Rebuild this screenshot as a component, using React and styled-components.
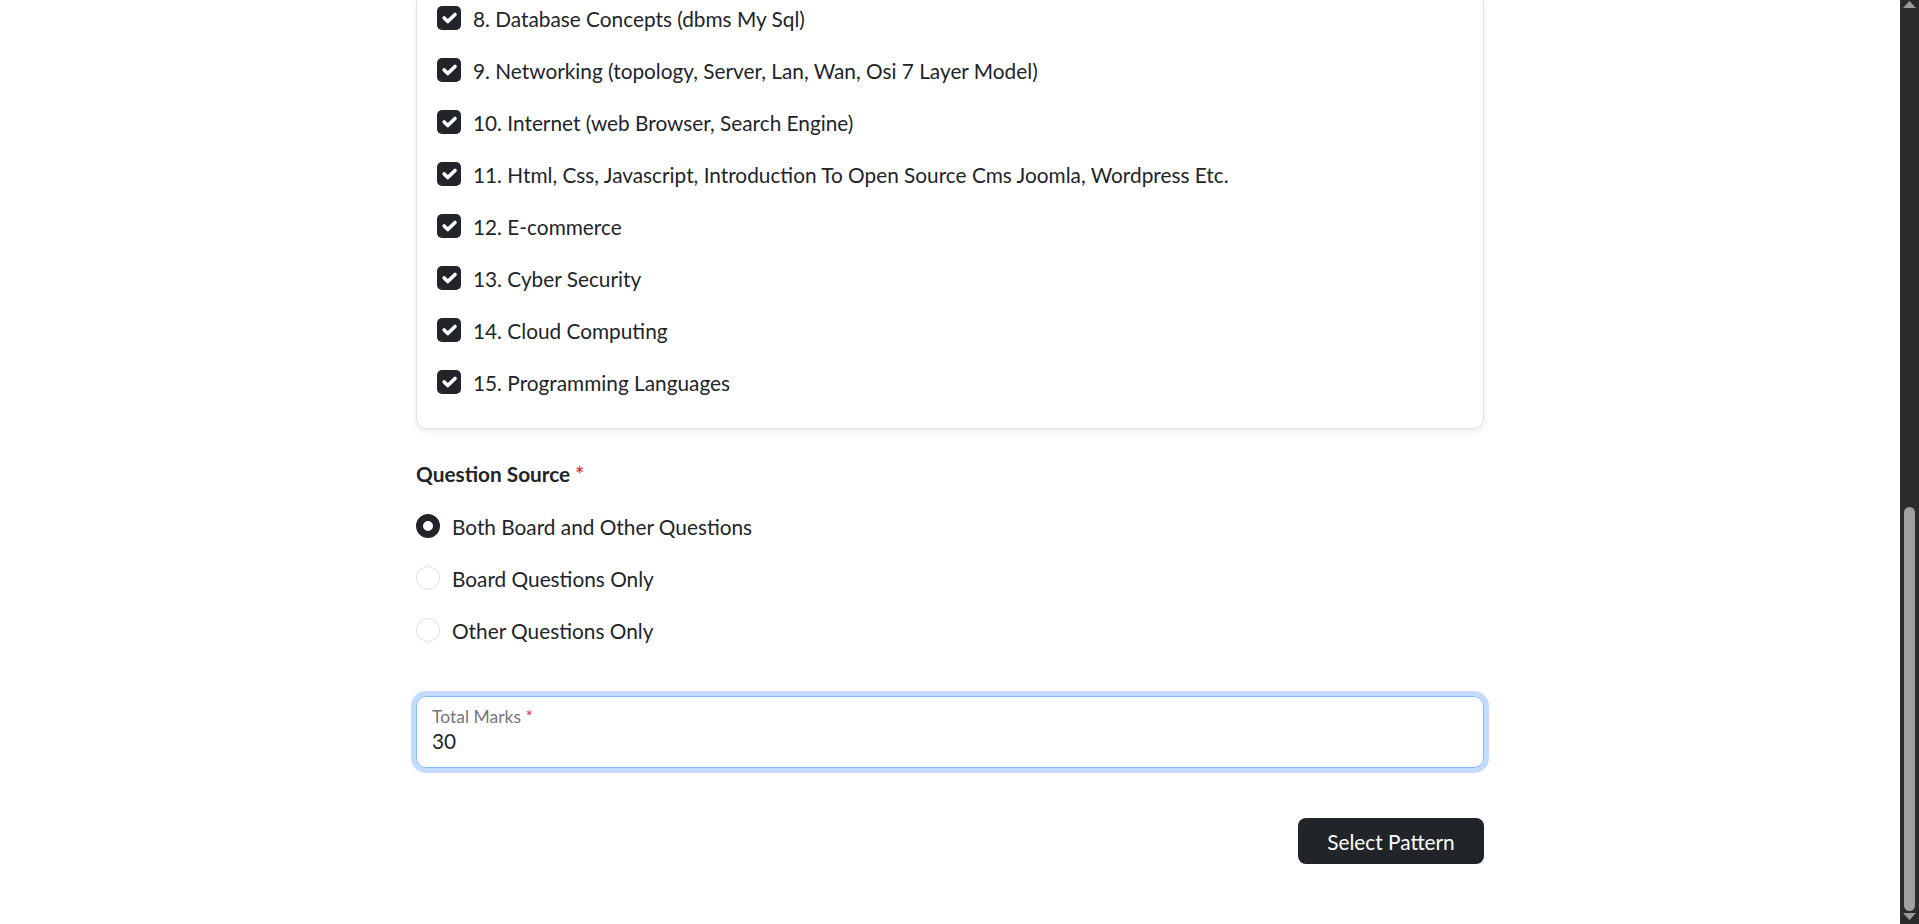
import React from 'react';
import styled, { createGlobalStyle } from 'styled-components';

const GlobalStyle = createGlobalStyle`
    body {
        margin: 0;
        background: #fff;
        color: #212529;
        font-family: Lato, "Noto Sans", "Liberation Sans", sans-serif;
        overflow: hidden;
    }
`

const Page = styled.div`
    display: flex;
    height: 100vh;
`

const Main = styled.main`
    flex: 1;
    display: flex;
    justify-content: center;
    overflow: hidden;
`

const Column = styled.div`
    width: 1068px;
    display: flex;
    flex-direction: column;
`

const TopicCard = styled.div`
    border: 1px solid #dee2e6;
    border-top: none;
    border-radius: 0 0 10px 10px;
    box-shadow: 0 3px 6px rgba(0, 0, 0, 0.075);
    padding: 6px 20px 34px;
    display: flex;
    flex-direction: column;
    gap: 28px;
`

const CheckRow = styled.label`
    display: flex;
    align-items: center;
    gap: 12px;
    height: 24px;
    font-size: 20.8px;
`

const CheckBox = styled.span`
    width: 24px;
    height: 24px;
    flex: none;
    border-radius: 5px;
    background: #212529;
    display: flex;
    align-items: center;
    justify-content: center;
`

const SectionLabel = styled.div`
    margin-top: 30px;
    font-size: 20.8px;
    font-weight: 700;
    line-height: 30px;
    span {
        color: #dc3545;
    }
`

const RadioList = styled.div`
    margin-top: 25px;
    display: flex;
    flex-direction: column;
    gap: 28px;
`

const RadioRow = styled.label`
    display: flex;
    align-items: center;
    gap: 12px;
    height: 24px;
    font-size: 20.8px;
`

const Radio = styled.span`
    width: 24px;
    height: 24px;
    flex: none;
    box-sizing: border-box;
    border-radius: 50%;
    background: #fff;
    border: ${p => p.checked ? '7px solid #212529' : '1px solid #dee2e6'};
`

const FloatingField = styled.div`
    margin-top: 54px;
    height: 72px;
    box-sizing: border-box;
    border: 1px solid #86b7fe;
    border-radius: 10px;
    box-shadow: 0 0 0 5px rgba(13, 110, 253, 0.25);
    padding: 10px 15px 14px;
`

const FieldLabel = styled.div`
    font-size: 17.5px;
    line-height: 20px;
    color: rgba(33, 37, 41, 0.65);
    span {
        color: #dc3545;
    }
`

const FieldValue = styled.div`
    margin-top: 2px;
    font-size: 20.8px;
    line-height: 24px;
`

const Actions = styled.div`
    margin-top: 50px;
    display: flex;
    justify-content: flex-end;
`

const Button = styled.button`
    width: 186px;
    height: 46px;
    border: none;
    border-radius: 8px;
    background: #212529;
    color: #fff;
    font-family: inherit;
    font-size: 20.8px;
`

const ScrollTrack = styled.div`
    width: 19px;
    flex: none;
    background: #2b2b2b;
    display: flex;
    flex-direction: column;
    align-items: center;
    justify-content: space-between;
    padding: 1px 0 4px;
    box-sizing: border-box;
`

const ThumbArea = styled.div`
    flex: 1;
    display: flex;
    flex-direction: column;
    justify-content: flex-end;
    padding-bottom: 2px;
`

const Thumb = styled.div`
    width: 11px;
    height: 404px;
    border-radius: 6px;
    background: #a0a0a0;
`

const topics = [
    '8. Database Concepts (dbms My Sql)',
    '9. Networking (topology, Server, Lan, Wan, Osi 7 Layer Model)',
    '10. Internet (web Browser, Search Engine)',
    '11. Html, Css, Javascript, Introduction To Open Source Cms Joomla, Wordpress Etc.',
    '12. E-commerce',
    '13. Cyber Security',
    '14. Cloud Computing',
    '15. Programming Languages'
]

const sources = [
    { label: 'Both Board and Other Questions', checked: true },
    { label: 'Board Questions Only', checked: false },
    { label: 'Other Questions Only', checked: false }
]

const Check = () => (
    <svg width="24" height="24" viewBox="0 0 20 20">
        <path d="M6 10l3 3l6-6" fill="none" stroke="#fff" strokeWidth="3" strokeLinecap="round" strokeLinejoin="round" />
    </svg>
)

const Arrow = ({ up }) => (
    <svg width="13" height="7" viewBox="0 0 13 7">
        <path d={up ? 'M0 7L6.5 0L13 7Z' : 'M0 0L6.5 7L13 0Z'} fill="#9a9a9a" />
    </svg>
)

export default function App() {
    return (
        <Page>
            <GlobalStyle />
            <Main>
                <Column>
                    <TopicCard>
                        {topics.map(t => (
                            <CheckRow key={t}>
                                <CheckBox><Check /></CheckBox>
                                {t}
                            </CheckRow>
                        ))}
                    </TopicCard>
                    <SectionLabel>Question Source <span>*</span></SectionLabel>
                    <RadioList>
                        {sources.map(s => (
                            <RadioRow key={s.label}>
                                <Radio checked={s.checked} />
                                {s.label}
                            </RadioRow>
                        ))}
                    </RadioList>
                    <FloatingField>
                        <FieldLabel>Total Marks <span>*</span></FieldLabel>
                        <FieldValue>30</FieldValue>
                    </FloatingField>
                    <Actions>
                        <Button>Select Pattern</Button>
                    </Actions>
                </Column>
            </Main>
            <ScrollTrack>
                <Arrow up />
                <ThumbArea><Thumb /></ThumbArea>
                <Arrow />
            </ScrollTrack>
        </Page>
    );
}
